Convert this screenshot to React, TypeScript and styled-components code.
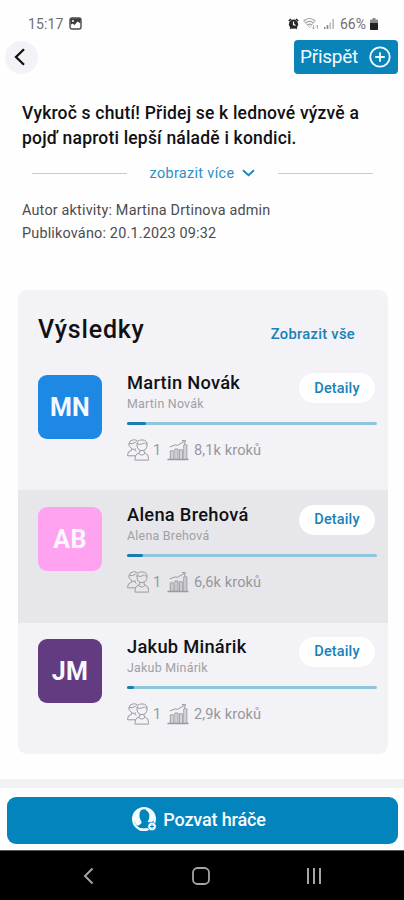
import React from "react";
import styled, { createGlobalStyle } from "styled-components";

const GlobalStyle = createGlobalStyle`
  * { box-sizing: border-box; }
  body { margin: 0; background: #fefefe; font-family: Roboto, "Liberation Sans", sans-serif; }
  button { font-family: inherit; border: 0; padding: 0; cursor: pointer; }
  h1, h2, h3, p { margin: 0; }
  svg { display: block; flex: none; }
`;

const Screen = styled.div`
  width: 404px;
  height: 900px;
  display: flex;
  flex-direction: column;
  overflow: hidden;
  background: #fefefe;
  color: #111114;
`;

const StatusBar = styled.div`
  height: 40px;
  padding: 7px 26px 0 28px;
  display: flex;
  align-items: center;
  justify-content: space-between;
  font-size: 14px;
  color: #707070;
`;

const StatusGroup = styled.div<{ $gap: number }>`
  display: flex;
  align-items: center;
  gap: ${(p) => p.$gap}px;
`;

const Clock = styled.span`
  letter-spacing: 0.1px;
`;

const Battery = styled.span`
  margin-left: 1px;
`;

const Header = styled.header`
  height: 34px;
  padding: 0 6px 0 5px;
  display: flex;
  align-items: center;
  justify-content: space-between;
`;

const BackButton = styled.button`
  width: 33px;
  height: 33px;
  padding-right: 4px;
  border-radius: 50%;
  background: #f3f3f7;
  display: grid;
  place-items: center;
`;

const ContributeButton = styled.button`
  width: 104px;
  height: 34px;
  padding: 0 7px 1px 6px;
  border-radius: 4px;
  background: #0983b8;
  color: #f4fbff;
  display: flex;
  align-items: center;
  justify-content: space-between;
  font-size: 19px;
  letter-spacing: -0.25px;
`;

const Intro = styled.section`
  height: 216px;
  padding: 27px 22px 0;
`;

const Title = styled.h1`
  font-size: 17.5px;
  line-height: 24.5px;
  font-weight: 500;
  letter-spacing: 0.19px;
  white-space: nowrap;
`;

const MoreRow = styled.div`
  height: 24px;
  margin: 11px 9px 0 10px;
  display: flex;
  align-items: center;
  justify-content: space-between;
`;

const Rule = styled.span`
  width: 95px;
  height: 1px;
  background: #c9c9c9;
`;

const MoreButton = styled.button`
  background: none;
  color: #2f8fc2;
  font-size: 14.4px;
  display: flex;
  align-items: center;
  gap: 8px;
  letter-spacing: 0.35px;
`;

const Meta = styled.p`
  font-size: 14.4px;
  line-height: 22.5px;
  letter-spacing: 0.19px;
  color: #4c4c4e;
  white-space: nowrap;
`;

const MetaBlock = styled.div`
  margin-top: 15px;
`;

const Card = styled.section`
  width: 370px;
  height: 464px;
  margin-left: 18px;
  border-radius: 9px;
  overflow: hidden;
  background: #f2f2f7;
  flex: none;
`;

const CardHeader = styled.div`
  height: 68px;
  padding: 11px 33px 0 20px;
  display: flex;
  align-items: center;
  justify-content: space-between;
`;

const CardTitle = styled.h2`
  font-size: 25px;
  font-weight: 500;
  letter-spacing: 0.8px;
`;

const ShowAll = styled.button`
  background: none;
  color: #1981b8;
  font-size: 14.7px;
  font-weight: 500;
  letter-spacing: 0.3px;
  padding-top: 8px;
`;

const ResultRow = styled.article<{ $shaded: boolean; $top: number }>`
  height: ${(p) => (p.$shaded ? 133 : 132)}px;
  padding: ${(p) => p.$top}px 11px 0 20px;
  display: flex;
  gap: 25px;
  background: ${(p) => (p.$shaded ? "#e7e7eb" : "transparent")};
`;

const Avatar = styled.div<{ $color: string }>`
  width: 64px;
  height: 64px;
  border-radius: 9px;
  background: ${(p) => p.$color};
  color: #f8f8ff;
  font-size: 25px;
  font-weight: 700;
  letter-spacing: 0.3px;
  line-height: 65px;
  text-align: center;
`;

const Details = styled.div`
  flex: 1;
`;

const DetailsTop = styled.div`
  height: 47px;
  display: flex;
  justify-content: space-between;
  padding-right: 2px;
`;

const Names = styled.div`
  margin-top: -4px;
`;

const Name = styled.h3`
  font-size: 18.3px;
  line-height: 23px;
  font-weight: 500;
  letter-spacing: 0.28px;
  white-space: nowrap;
`;

const SubName = styled.p`
  font-size: 12.4px;
  line-height: 20px;
  letter-spacing: 0.25px;
  color: #a0a0a5;
  white-space: nowrap;
`;

const DetailButton = styled.button`
  width: 76px;
  height: 30px;
  margin-top: -2px;
  border-radius: 15px;
  background: #fefefe;
  color: #1981b8;
  font-size: 14.5px;
  font-weight: 500;
  letter-spacing: 0.15px;
`;

const Track = styled.div`
  height: 3px;
  border-radius: 2px;
  background: #90c5de;
`;

const Progress = styled.div<{ $width: number }>`
  width: ${(p) => p.$width}px;
  height: 100%;
  border-radius: 2px;
  background: #1a7db2;
`;

const Stats = styled.div`
  margin-top: 14px;
  height: 22px;
  display: flex;
  align-items: center;
  color: #97979c;
  font-size: 14.6px;
  letter-spacing: 0.1px;
`;

const PlayerCount = styled.span`
  width: 18px;
  padding-left: 4px;
`;

const Steps = styled.span`
  padding-left: 5px;
`;

const Strip = styled.div`
  height: 9px;
  margin-top: 25px;
  background: #f2f2f4;
  flex: none;
`;

const Footer = styled.footer`
  height: 62px;
  padding: 9px 6px 0 7px;
  flex: none;
`;

const InviteButton = styled.button`
  width: 100%;
  height: 47px;
  border-radius: 9px;
  background: #0484bc;
  color: #f8fcff;
  font-size: 18px;
  font-weight: 500;
  letter-spacing: -0.15px;
  display: flex;
  align-items: center;
  justify-content: center;
  gap: 6px;
  padding: 0 7px 3px 0;
`;

const SystemNav = styled.nav`
  height: 50px;
  background: #000;
  border-top: 1px solid #555;
  display: flex;
  align-items: center;
  justify-content: space-between;
  padding: 1px 80px 0 82px;
  flex: none;
`;

const PictureIcon = () => (
  <svg width="13" height="13" viewBox="0 0 13 13">
    <rect x="1" y="1" width="11" height="11" rx="2" fill="#fff" stroke="#4a4a4a" strokeWidth="1.4" />
    <path d="M1.5 1.5h10v5L8.5 4.5 5.5 8 3.5 6.5 1.5 8z" fill="#3c3c3c" />
    <circle cx="4" cy="4" r="1" fill="#fff" />
  </svg>
);

const AlarmIcon = () => (
  <svg width="11" height="12" viewBox="0 0 11 12">
    <path d="M.8 3 3 1M10.2 3 8 1M2.3 10.8l1-1.4M8.7 10.8l-1-1.4" stroke="#222" strokeWidth="1.6" />
    <circle cx="5.5" cy="6.2" r="4.6" fill="#292929" />
    <path d="M5.5 3.5v3l2 .9" fill="none" stroke="#fff" strokeWidth="1.2" />
  </svg>
);

const WifiIcon = () => (
  <svg width="16" height="13" viewBox="0 0 16 13" fill="none" stroke="#9a9a9a">
    <path d="M.7 4Q6.5-1 12.3 4M2.5 6q4-3.5 8 0M4.5 8q2-1.6 4 0" strokeWidth="1.2" />
    <path d="M.7 4 6.5 10.5 12.3 4" strokeWidth=".6" />
    <path d="M10.5 8v4M9 10.5l1.5 1.5L12 10.5M14.5 12V8M13 9.5 14.5 8" strokeWidth=".8" />
  </svg>
);

const SignalIcon = () => (
  <svg width="12" height="11" viewBox="0 0 12 11">
    <path d="M1 9h1.5v2H1zM3.7 7h1.6v4H3.7z" fill="#888" />
    <path d="M6.5 4.5H8V11H6.5zM9.4 1H11v10H9.4z" fill="#bcbcbc" />
  </svg>
);

const BatteryIcon = () => (
  <svg width="8" height="12" viewBox="0 0 8 12">
    <path d="M2.5 0h3v1.5H7q1 0 1 1V11q0 1-1 1H1q-1 0-1-1V2.5q0-1 1-1h1.5z" fill="#8a8a8a" />
    <path d="M0 5h8v6q0 1-1 1H1q-1 0-1-1z" fill="#222" />
  </svg>
);

const BackIcon = () => (
  <svg width="12" height="18" viewBox="0 0 12 18">
    <path d="M10 1.2 2 9l8 7.8" fill="none" stroke="#111" strokeWidth="2.3" />
  </svg>
);

const PlusCircleIcon = () => (
  <svg width="22" height="22" viewBox="0 0 22 22" fill="none" stroke="#f2fbff" strokeWidth="1.8">
    <circle cx="11" cy="11" r="9.7" />
    <path d="M11 6.2v9.6M6.2 11h9.6" />
  </svg>
);

const ChevronDown = () => (
  <svg width="13" height="8" viewBox="0 0 13 8">
    <path d="m1 1.3 5.5 5 5.5-5" fill="none" stroke="#1d86bb" strokeWidth="1.9" />
  </svg>
);

const PlayersIcon = () => (
  <svg width="22" height="22" viewBox="0 0 22 22" fill="none" stroke="#99999e" strokeWidth="1">
    <path d="M9 10Q5 11.3 3.2 7.8 1 7 2 4.6 2.6 1 6.5.8q2.7-.2 4 1.3M2.4 4.6q3.6.6 6.4-1.6" />
    <path d="M10 6.6Q9 1 15 .9q6 .2 5 5.6-.6 5-5 5.1-4.4 0-5-5zM10 5q4.8 1.3 7.2-1.2 1 1.4 2.8 1.4" />
    <path d="M4.6 9.6v1.7Q.8 12 .6 15.6v1.2h7.6M7.4 10.6l2.1 2" />
    <path d="M12.8 11.4v2l-1.8.9q-2.8.8-3 5.2v1.6h13.6v-1.6q-.2-4.4-3-5.2l-1.5-.9v-2M11.3 14.3q3.5 3.4 7 0" />
  </svg>
);

const ChartIcon = () => (
  <svg width="22" height="22" viewBox="0 0 22 22" fill="none" stroke="#99999e" strokeWidth="1">
    <path d="M.5 20.5h21" strokeWidth="1.3" />
    <path d="M3.3 20v-8.2h2.9V20M7.9 20V10h3v10M12.4 20v-9.2h2.9V20M16.8 20V5.8h3V20" />
    <path d="M2.8 8 8 5.9l2.5.4 7-4M15 1.5l3.6.2-1.3 3.3" />
    <path d="M4.7 12.5V20M9.4 10.5V20M13.8 11.5V20M18.3 6.5V20" strokeWidth=".45" />
  </svg>
);

const InviteIcon = () => (
  <svg width="25" height="25" viewBox="0 0 25 25">
    <circle cx="12" cy="12" r="10.9" fill="none" stroke="#f3fbff" strokeWidth="2.2" />
    <path d="M2 6Q5 1.5 11 1.3L8.5 4Q7 6 7.7 11l2 4.2q-.3 2.2-4.4 3.6Q-.5 13 2 6zM14 1.5q8 1 9 10l-3.4 4.3-4.1-1q1.6-2 1.8-4.8.6-4.5-3.3-6.8z" fill="#f3fbff" />
    <path d="M6.5 22q2.5-1.7 5-.2 2.5-1.2 4.6.2l-1 1.7H8z" fill="#f3fbff" />
    <circle cx="20" cy="19.5" r="4.3" fill="#f3fbff" stroke="#0484bc" strokeWidth=".7" />
    <path d="M20 17.5v4M18 19.5h4" stroke="#0484bc" strokeWidth="1" />
  </svg>
);

const NavBack = () => (
  <svg width="12" height="18" viewBox="0 0 12 18">
    <path d="M10.5 1.5 3 9l7.5 7.5" fill="none" stroke="#a5a5a5" strokeWidth="2" />
  </svg>
);

const NavHome = () => (
  <svg width="20" height="18" viewBox="0 0 20 18">
    <rect x="3" y="1" width="16" height="16" rx="4.5" fill="none" stroke="#a5a5a5" strokeWidth="1.8" />
  </svg>
);

const NavRecents = () => (
  <svg width="18" height="18" viewBox="0 0 18 18">
    <path d="M2 1v16M8 1v16M14 1v16" stroke="#a5a5a5" strokeWidth="2" />
  </svg>
);

const players = [
  { initials: "MN", name: "Martin Novák", color: "#1e88e5", progress: 19, steps: "8,1k kroků", top: 17 },
  { initials: "AB", name: "Alena Brehová", color: "#ffa3f0", progress: 16, steps: "6,6k kroků", top: 16.5 },
  { initials: "JM", name: "Jakub Minárik", color: "#633b80", progress: 7, steps: "2,9k kroků", top: 15.5 },
];

export default function App() {
  return (
    <Screen>
      <GlobalStyle />
      <StatusBar>
        <StatusGroup $gap={6}>
          <Clock>15:17</Clock>
          <PictureIcon />
        </StatusGroup>
        <StatusGroup $gap={4}>
          <AlarmIcon />
          <WifiIcon />
          <SignalIcon />
          <Battery>66%</Battery>
          <BatteryIcon />
        </StatusGroup>
      </StatusBar>
      <Header>
        <BackButton aria-label="Zpět"><BackIcon /></BackButton>
        <ContributeButton>Přispět<PlusCircleIcon /></ContributeButton>
      </Header>
      <Intro>
        <Title>Vykroč s chutí! Přidej se k lednové výzvě a<br />pojď naproti lepší náladě i kondici.</Title>
        <MoreRow>
          <Rule />
          <MoreButton>zobrazit více<ChevronDown /></MoreButton>
          <Rule />
        </MoreRow>
        <MetaBlock>
          <Meta>Autor aktivity: Martina Drtinova admin</Meta>
          <Meta>Publikováno: 20.1.2023 09:32</Meta>
        </MetaBlock>
      </Intro>
      <Card>
        <CardHeader>
          <CardTitle>Výsledky</CardTitle>
          <ShowAll>Zobrazit vše</ShowAll>
        </CardHeader>
        {players.map((p, i) => (
          <ResultRow key={p.initials} $shaded={i === 1} $top={p.top}>
            <Avatar $color={p.color}>{p.initials}</Avatar>
            <Details>
              <DetailsTop>
                <Names>
                  <Name>{p.name}</Name>
                  <SubName>{p.name}</SubName>
                </Names>
                <DetailButton>Detaily</DetailButton>
              </DetailsTop>
              <Track><Progress $width={p.progress} /></Track>
              <Stats>
                <PlayersIcon />
                <PlayerCount>1</PlayerCount>
                <ChartIcon />
                <Steps>{p.steps}</Steps>
              </Stats>
            </Details>
          </ResultRow>
        ))}
      </Card>
      <Strip />
      <Footer>
        <InviteButton><InviteIcon />Pozvat hráče</InviteButton>
      </Footer>
      <SystemNav>
        <NavBack />
        <NavHome />
        <NavRecents />
      </SystemNav>
    </Screen>
  );
}
